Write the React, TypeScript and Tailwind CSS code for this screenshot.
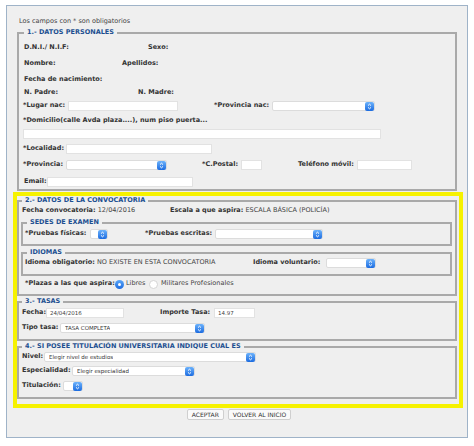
import type { ReactNode } from 'react';

// Tiny helpers for the cramped legacy form
function Row({ className = '', children }: { className?: string; children?: ReactNode }) {
  return <div className={`flex items-center h-[10px] whitespace-nowrap ${className}`}>{children}</div>;
}

function Input({ className = '', value = '' }: { className?: string; value?: string }) {
  return (
    <div className={`h-[10px] bg-white border border-[#e2e2e2] shrink-0 flex items-center pl-[3px] text-[5.5px] text-[#444] font-normal ${className}`}>
      {value}
    </div>
  );
}

function Select({ className = '', value = '' }: { className?: string; value?: string }) {
  return (
    <div className={`h-[10px] bg-white rounded-[2px] border border-[#dcdcdc] shrink-0 flex items-center justify-between pl-[4px] text-[5.5px] text-[#333] font-normal ${className}`}>
      <span className="truncate">{value}</span>
      <span className="w-[9px] h-[9px] rounded-[2px] bg-linear-to-b from-[#6cb2fb] to-[#1a6be0] flex items-center justify-center shrink-0">
        <svg width="5" height="7" viewBox="0 0 5 7" fill="none" stroke="white" strokeWidth="1">
          <path d="M1 2.6 L2.5 1.2 L4 2.6" />
          <path d="M1 4.4 L2.5 5.8 L4 4.4" />
        </svg>
      </span>
    </div>
  );
}

function Legend({ children, className = '' }: { children: ReactNode; className?: string }) {
  return (
    <legend className={`px-[3px] h-[9px] leading-[9px] font-bold text-[#1d4f91] whitespace-nowrap ${className}`}>
      {children}
    </legend>
  );
}

function Radio({ checked }: { checked?: boolean }) {
  return checked ? (
    <span className="w-[9px] h-[9px] rounded-full bg-linear-to-b from-[#5aa6f8] to-[#1a6be0] flex items-center justify-center shrink-0">
      <span className="w-[3px] h-[3px] rounded-full bg-white" />
    </span>
  ) : (
    <span className="w-[9px] h-[9px] rounded-full bg-white border border-[#d4d4d4] shrink-0" />
  );
}

const B = ({ children, className = '' }: { children: ReactNode; className?: string }) => (
  <span className={`font-bold text-[#333] shrink-0 ${className}`}>{children}</span>
);

const V = ({ children }: { children: ReactNode }) => <span className="font-normal text-[#444]">{children}</span>;

export default function App() {
  return (
    <div className="w-[474px] h-[446px] bg-white pt-[5px] pl-[6px] text-[6.5px] text-[#333] [font-family:'DejaVu_Sans',Verdana,sans-serif]">
      <div className="w-[462px] h-[433px] border border-[#9fb3c8] bg-[#efefef] px-[10px] pt-[11px]">
        <div className="h-[10px] flex items-center pl-[2px] text-[#444]">Los campos con * son obligatorios</div>

        {/* 1.- DATOS PERSONALES */}
        <fieldset className="mt-[1px] border-2 border-[#a9a9a9] pl-[4px] pr-[4px] pb-[2px]">
          <Legend className="ml-[1px]">1.- DATOS PERSONALES</Legend>
          <Row className="mt-[6px]">
            <B className="w-[125px] pl-[1px]">D.N.I./ N.I.F:</B>
            <B>Sexo:</B>
          </Row>
          <Row className="mt-[6px]">
            <B className="w-[99px] pl-[1px]">Nombre:</B>
            <B>Apellidos:</B>
          </Row>
          <Row className="mt-[6px]">
            <B className="pl-[1px]">Fecha de nacimiento:</B>
          </Row>
          <Row className="mt-[3px]">
            <B className="w-[115px] pl-[1px]">N. Padre:</B>
            <B>N. Madre:</B>
          </Row>
          <Row className="mt-[3px]">
            <B className="w-[45px]">*Lugar nac:</B>
            <Input className="w-[110px]" />
            <B className="ml-[36px] w-[58px]">*Provincia nac:</B>
            <Select className="w-[103px]" />
          </Row>
          <Row className="mt-[5px]">
            <B>*Domicilio(calle Avda plaza....), num piso puerta...</B>
          </Row>
          <Row className="mt-[3px]">
            <Input className="w-[358px]" />
          </Row>
          <Row className="mt-[5px]">
            <B className="w-[43px]">*Localidad:</B>
            <Input className="w-[146px]" />
          </Row>
          <Row className="mt-[6px]">
            <B className="w-[43px]">*Provincia:</B>
            <Select className="w-[101px]" />
            <B className="ml-[35px] w-[39px]">*C.Postal:</B>
            <Input className="w-[21px]" />
            <B className="ml-[36px] w-[59px]">Teléfono móvil:</B>
            <Input className="w-[55px]" />
          </Row>
          <Row className="mt-[7px]">
            <B className="w-[24px] pl-[1px]">Email:</B>
            <Input className="w-[146px]" />
          </Row>
        </fieldset>

        {/* highlighted block */}
        <div className="mt-[1px] -ml-[4px] -mr-[6px] border-4 border-[#f6f200] pr-[2px] pb-[5px]">
          {/* 2.- DATOS DE LA CONVOCATORIA */}
          <fieldset className="border-2 border-[#a9a9a9] pl-[2px] pr-[3px] pb-[5px]">
            <Legend className="ml-[1px]">2.- DATOS DE LA CONVOCATORIA</Legend>
            <Row className="mt-[1px] pl-[1px]">
              <span className="w-[148px] shrink-0"><B>Fecha convocatoria:</B> <V>12/04/2016</V></span>
              <span><B>Escala a que aspira:</B> <V>ESCALA BÁSICA (POLICÍA)</V></span>
            </Row>

            <fieldset className="mt-[2px] border-2 border-[#a9a9a9] pl-[2px] pb-[5px]">
              <Legend className="ml-[2px]">SEDES DE EXAMEN</Legend>
              <Row className="mt-[2px]">
                <B className="w-[65px]">*Pruebas físicas:</B>
                <Select className="w-[18px]" />
                <B className="ml-[37px] w-[70px]">*Pruebas escritas:</B>
                <Select className="w-[108px]" />
              </Row>
            </fieldset>

            <fieldset className="mt-[2px] border-2 border-[#a9a9a9] pl-[2px] pb-[6px]">
              <Legend className="ml-[2px]">IDIOMAS</Legend>
              <Row className="mt-[1px]">
                <span className="w-[228px] shrink-0"><B>Idioma obligatorio:</B> <V>NO EXISTE EN ESTA CONVOCATORIA</V></span>
                <B className="w-[73px]">Idioma voluntario:</B>
                <Select className="w-[50px]" />
              </Row>
            </fieldset>

            <Row className="mt-[3px] pl-[4px]">
              <B className="w-[90px]">*Plazas a las que aspira:</B>
              <Radio checked />
              <span className="ml-[2px] w-[23px] text-[#444]">Libres</span>
              <Radio />
              <span className="ml-[3px] text-[#444]">Militares Profesionales</span>
            </Row>
          </fieldset>

          {/* 3.- TASAS */}
          <fieldset className="mt-[1px] border-2 border-[#a9a9a9] pl-[3px] pb-[6px]">
            <Legend className="ml-0">3.- TASAS</Legend>
            <Row className="mt-[2px]">
              <B className="w-[24px]">Fecha:</B>
              <Input className="w-[78px]" value="24/04/2016" />
              <B className="ml-[36px] w-[54px]">Importe Tasa:</B>
              <Input className="w-[41px]" value="14.97" />
            </Row>
            <Row className="mt-[5px]">
              <B className="w-[38px]">Tipo tasa:</B>
              <Select className="w-[145px]" value="TASA COMPLETA" />
            </Row>
          </fieldset>

          {/* 4.- TITULACIÓN */}
          <fieldset className="mt-[1px] border-2 border-[#a9a9a9] pl-[3px] pb-[6px]">
            <Legend className="ml-0">4.- SI POSEE TITULACIÓN UNIVERSITARIA INDIQUE CUAL ES</Legend>
            <Row className="mt-[1px]">
              <B className="w-[22px]">Nivel:</B>
              <Select className="w-[212px]" value="Elegir nivel de estudios" />
            </Row>
            <Row className="mt-[4px]">
              <B className="w-[50px]">Especialidad:</B>
              <Select className="w-[123px]" value="Elegir especialidad" />
            </Row>
            <Row className="mt-[5px]">
              <B className="w-[41px]">Titulación:</B>
              <Select className="w-[20px]" />
            </Row>
          </fieldset>
        </div>

        <div className="mt-[1px] flex justify-center gap-[4px] pl-[4px]">
          <button className="h-[11px] px-[4px] bg-[#fafafa] border border-[#cfcfcf] rounded-[2px] text-[6px] text-[#333] leading-none">ACEPTAR</button>
          <button className="h-[11px] px-[4px] bg-[#fafafa] border border-[#cfcfcf] rounded-[2px] text-[6px] text-[#333] leading-none">VOLVER AL INICIO</button>
        </div>
      </div>
    </div>
  );
}
